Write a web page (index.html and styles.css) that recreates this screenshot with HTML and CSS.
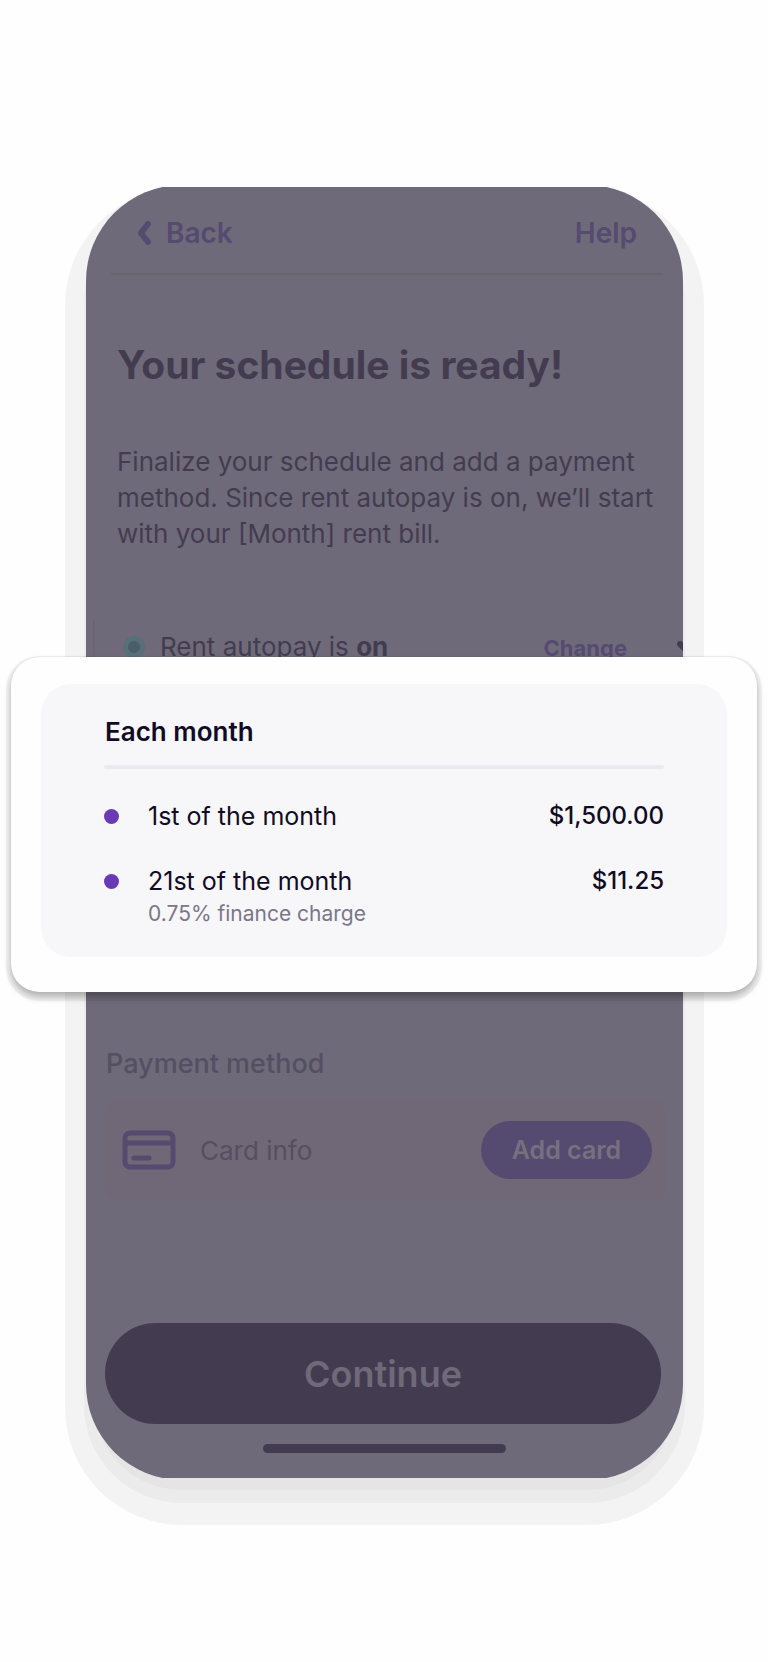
FILE: index.html
```
<!DOCTYPE html>
<html lang="en">
<head>
<meta charset="utf-8">
<meta name="viewport" content="width=device-width, initial-scale=1">
<title>Your schedule is ready</title>
<link rel="stylesheet" href="styles.css">
</head>
<body>
<main class="stage">
  <div class="phone">
    <div class="screen">
      <header class="topbar">
        <button class="nav-button" type="button">
          <svg class="back-icon" viewBox="0 0 14 24" aria-hidden="true"><path d="M11 3 L4 12 L11 21"/></svg>
          Back
        </button>
        <button class="nav-button" type="button">Help</button>
      </header>

      <section class="intro">
        <h1 class="title">Your schedule is ready!</h1>
        <p class="lead">Finalize your schedule and add a payment method. Since rent autopay is on, we’ll start with your [Month] rent bill.</p>
      </section>

      <section class="autopay">
        <span class="status-dot"></span>
        <p class="autopay-label">Rent autopay is <strong>on</strong></p>
        <a class="change-link" href="#">Change</a>
        <svg class="expand-icon" viewBox="0 0 22 14" aria-hidden="true"><path d="M3 3 L11 11 L19 3"/></svg>
      </section>

      <section class="payment">
        <h2 class="payment-title">Payment method</h2>
        <div class="card-row">
          <svg class="card-icon" viewBox="0 0 54 40" aria-hidden="true">
            <rect x="3" y="3" width="48" height="34" rx="5"/>
            <path d="M3 13 H51"/>
            <path d="M12 28 H27" stroke-linecap="round"/>
          </svg>
          <span class="card-label">Card info</span>
          <button class="add-card" type="button">Add card</button>
        </div>
      </section>

      <button class="continue" type="button">Continue</button>
      <div class="home-bar"></div>
    </div>

    <section class="sheet" aria-labelledby="sheet-title">
      <div class="summary">
        <h2 class="summary-title" id="sheet-title">Each month</h2>
        <ul class="charges">
          <li class="charge">
            <span class="bullet"></span>
            <span class="charge-date">1st of the month</span>
            <span class="amount">$1,500.00</span>
          </li>
          <li class="charge">
            <span class="bullet"></span>
            <span class="charge-date">21st of the month</span>
            <span class="amount">$11.25</span>
            <span class="note">0.75% finance charge</span>
          </li>
        </ul>
      </div>
    </section>
  </div>
</main>
</body>
</html>
```
FILE: styles.css
```
:root {
  --screen: #6f6a79;
  --ink: #433c50;
  --violet: #554a70;
  --muted: #544f61;
}

* { box-sizing: border-box; }

body {
  margin: 0;
  background: #fefefe;
  font-family: Inter, "Liberation Sans", sans-serif;
  color: var(--ink);
}

h1, h2, p, ul { margin: 0; padding: 0; }

button {
  border: 0;
  background: none;
  font: inherit;
  cursor: pointer;
}

.stage {
  max-width: 768px;
  margin: 0 auto;
  padding: 185px 85px 182px 86px;
}

.phone {
  position: relative;
  border-radius: 96px;
  background: linear-gradient(transparent 50%, #e5e5e5 50%);
  box-shadow:
    0 18px 0 -8px #e5e5e5,
    0 21px 0 2px #ebebeb,
    0 24px 0 21px #f3f3f3;
}

.screen {
  display: flex;
  flex-direction: column;
  overflow: hidden;
  padding: 2px 20px 27px 19px;
  border-radius: 96px;
  background: var(--screen);
  clip-path: inset(2px 0);
}

.topbar {
  display: flex;
  justify-content: space-between;
  align-items: center;
  height: 88px;
  margin: 0 0 0 6px;
  padding: 6px 26px 0 26px;
  border-bottom: 2px solid #68636f;
}

.nav-button {
  display: flex;
  align-items: center;
  gap: 15px;
  padding: 0;
  color: var(--violet);
  font-size: 28px;
  font-weight: 600;
  line-height: 32px;
}

.back-icon {
  width: 14px;
  height: 24px;
  fill: none;
  stroke: currentColor;
  stroke-width: 6;
  stroke-linecap: round;
  stroke-linejoin: round;
}

.intro { padding: 66px 0 0 12px; }

.title {
  font-size: 39px;
  font-weight: 700;
  line-height: 48px;
}

.lead {
  margin-top: 55px;
  font-size: 26px;
  line-height: 36px;
}

.autopay {
  display: flex;
  align-items: flex-start;
  height: 300px;
  margin: 68px -20px 0 -12px;
  padding-top: 9px;
  padding-left: 28px;
  border-left: 2px solid #6a6573;
}

.status-dot {
  flex: none;
  width: 22px;
  height: 22px;
  margin: 7px 15px 0 0;
  border: 5px solid #576f76;
  border-radius: 50%;
  background: #4b5d69;
}

.autopay-label {
  font-size: 26px;
  line-height: 36px;
}

.change-link {
  margin-left: auto;
  color: var(--violet);
  font-size: 22px;
  font-weight: 700;
  line-height: 38px;
  text-decoration: none;
}

.expand-icon {
  flex: none;
  width: 22px;
  height: 14px;
  margin: 12px -16px 0 50px;
  fill: none;
  stroke: var(--ink);
  stroke-width: 6;
  stroke-linecap: round;
}

.payment { margin-top: 126px; }

.payment-title {
  padding-left: 1px;
  color: var(--muted);
  font-size: 27px;
  font-weight: 500;
  line-height: 36px;
}

.card-row {
  display: flex;
  align-items: center;
  height: 100px;
  margin: 18px -3px 0 0;
  padding: 0 14px 0 17px;
  border-radius: 12px;
  background: #706877;
}

.card-icon {
  width: 54px;
  height: 40px;
  margin-right: 24px;
  fill: none;
  stroke: var(--violet);
  stroke-width: 5;
}

.card-label {
  color: var(--muted);
  font-size: 26px;
}

.add-card {
  width: 171px;
  height: 58px;
  margin-left: auto;
  padding: 0;
  border-radius: 29px;
  background: var(--violet);
  color: #77717f;
  font-size: 25px;
  font-weight: 600;
}

.continue {
  height: 101px;
  margin: 123px 2px 0 0;
  padding: 0;
  border-radius: 51px;
  background: var(--ink);
  color: var(--screen);
  font-size: 36px;
  font-weight: 600;
}

.home-bar {
  align-self: center;
  width: 243px;
  height: 9px;
  margin-top: 20px;
  border-radius: 5px;
  background: var(--ink);
}

.sheet {
  position: absolute;
  top: 472px;
  left: -75px;
  right: -74px;
  padding: 27px 30px 35px;
  border-radius: 28px;
  background: #fefefe;
  box-shadow:
    0 0 1px #8886,
    0 5px 7px #0004,
    0 4px 0 5px #0000000b;
}

.summary {
  padding: 31px 63px 28px;
  border-radius: 30px;
  background: #f7f7fa;
  color: #120b24;
}

.summary-title {
  padding: 0 1px 16px;
  font-size: 26px;
  font-weight: 600;
  line-height: 34px;
}

.charges {
  list-style: none;
  display: grid;
  gap: 29px;
}

.charges::before {
  content: "";
  height: 4px;
  border-radius: 2px;
  background: #ebeaf1;
}

.charge {
  display: grid;
  grid-template-columns: 15px 1fr auto;
  column-gap: 29px;
  align-items: center;
  font-size: 25px;
  line-height: 36px;
}

.bullet {
  width: 15px;
  height: 15px;
  border-radius: 50%;
  background: #6a3ab6;
}

.amount {
  font-size: 24px;
  font-weight: 500;
}

.note {
  grid-column: 2 / -1;
  color: #7b7688;
  font-size: 21px;
  line-height: 30px;
}
```
